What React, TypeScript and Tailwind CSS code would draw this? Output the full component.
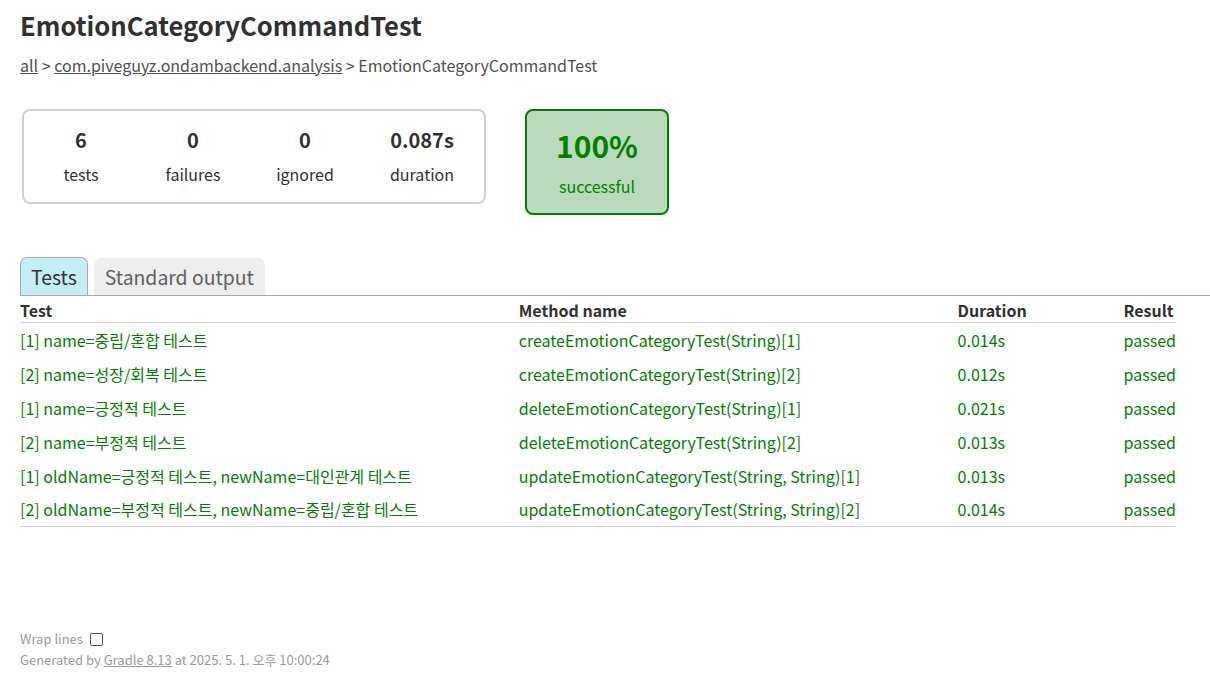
const rows = [
  {
    test: "[1] name=중립/혼합 테스트",
    method: "createEmotionCategoryTest(String)[1]",
    duration: "0.014s",
  },
  {
    test: "[2] name=성장/회복 테스트",
    method: "createEmotionCategoryTest(String)[2]",
    duration: "0.012s",
  },
  {
    test: "[1] name=긍정적 테스트",
    method: "deleteEmotionCategoryTest(String)[1]",
    duration: "0.021s",
  },
  {
    test: "[2] name=부정적 테스트",
    method: "deleteEmotionCategoryTest(String)[2]",
    duration: "0.013s",
  },
  {
    test: "[1] oldName=긍정적 테스트, newName=대인관계 테스트",
    method: "updateEmotionCategoryTest(String, String)[1]",
    duration: "0.013s",
  },
  {
    test: "[2] oldName=부정적 테스트, newName=중립/혼합 테스트",
    method: "updateEmotionCategoryTest(String, String)[2]",
    duration: "0.014s",
  },
];

// 요약 박스의 숫자 칸
const counters = [
  { value: "6", label: "tests", width: "w-[110px]" },
  { value: "0", label: "failures", width: "w-[110px]" },
  { value: "0", label: "ignored", width: "w-[110px]" },
  { value: "0.087s", label: "duration", width: "w-[120px]" },
];

export default function App() {
  return (
    <div className="min-h-[688px] bg-white pl-5 pt-[5px] font-['Noto_Sans_CJK_KR',sans-serif] text-[#303030]">
      <h1 className="text-[25.6px] font-bold leading-[40px]">EmotionCategoryCommandTest</h1>
      <div className="mt-[8px] text-[16px] leading-[24px] text-[#505050]">
        <a href="#" className="underline">all</a> &gt;{" "}
        <a href="#" className="underline">com.piveguyz.ondambackend.analysis</a> &gt; EmotionCategoryCommandTest
      </div>

      <div className="mt-[32px] flex items-start gap-[39px] pl-[2px]">
        {/* 요약 */}
        <div className="flex gap-[2px] rounded-[8px] border-2 border-[#d0d0d0] p-[2px]">
          {counters.map((c) => (
            <div key={c.label} className={`${c.width} flex flex-col items-center pt-[13px] pb-[14px]`}>
              <div className="text-[20px] font-bold leading-[28px]">{c.value}</div>
              <div className="mt-[8px] text-[16px] leading-[24px]">{c.label}</div>
            </div>
          ))}
        </div>

        <div className="flex h-[106px] w-[144px] flex-col items-center rounded-[8px] border-2 border-[#008000] bg-[#bbd9bb] pt-[15px] text-[#008000]">
          <div className="text-[30px] font-bold leading-[38px]">100%</div>
          <div className="mt-[10px] text-[16px] leading-[24px]">successful</div>
        </div>
      </div>

      {/* 탭 */}
      <div className="mt-[42px] flex items-end gap-[6px] border-b border-[#a8a8a8]">
        <div className="rounded-t-[7px] border border-b-0 border-[#a8a8a8] bg-[#c5eff7] px-[10px] pt-[4px] pb-[3px] text-[19.4px] leading-[30px]">
          Tests
        </div>
        <div className="rounded-t-[7px] bg-[#eeeeee] px-[11px] pt-[4px] pb-[3px] text-[19.4px] leading-[30px] text-[#606060]">
          Standard output
        </div>
      </div>

      <table className="w-[1156px] border-collapse text-left text-[16px]">
        <thead>
          <tr className="border-b border-[#d0d0d0]">
            <th className="w-[499px] pt-[3px] pb-[1px] leading-[22px] font-bold">Test</th>
            <th className="w-[439px] pt-[3px] pb-[1px] leading-[22px] font-bold">Method name</th>
            <th className="w-[166px] pt-[3px] pb-[1px] leading-[22px] font-bold">Duration</th>
            <th className="pt-[3px] pb-[1px] leading-[22px] font-bold">Result</th>
          </tr>
        </thead>
        <tbody className="border-b border-[#d0d0d0] text-[#008000]">
          {rows.map((r) => (
            <tr key={r.method}>
              <td className="h-[34px] leading-[22px]">{r.test}</td>
              <td className="leading-[22px]">{r.method}</td>
              <td className="leading-[22px]">{r.duration}</td>
              <td className="leading-[22px]">passed</td>
            </tr>
          ))}
        </tbody>
      </table>

      <div className="mt-[102px] text-[13px] leading-[20px] text-[#999999]">
        <label className="flex items-center gap-[7px]">
          Wrap lines
          <span className="inline-block h-[13px] w-[13px] rounded-[2px] border border-[#555]" />
        </label>
        <div className="mt-[1px]">
          Generated by <a href="#" className="underline">Gradle 8.13</a> at 2025. 5. 1. 오후 10:00:24
        </div>
      </div>
    </div>
  );
}
